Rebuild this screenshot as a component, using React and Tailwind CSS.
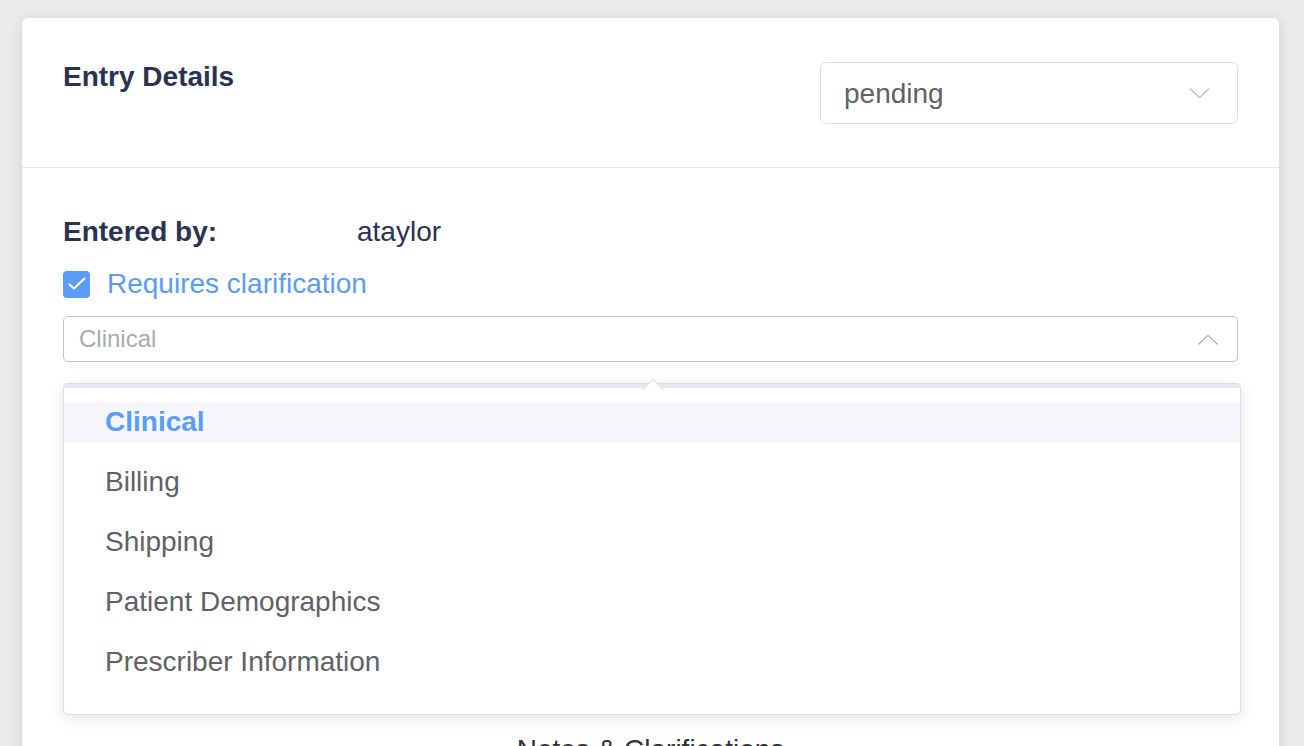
import { useState } from 'react';

const categories = ['Clinical', 'Billing', 'Shipping', 'Patient Demographics', 'Prescriber Information'];

const Chevron = ({ up = false, className = '' }) => (
  <svg viewBox="0 0 22 12" className={className} fill="none" stroke="currentColor" strokeWidth="1.3" strokeLinecap="round" strokeLinejoin="round">
    {up ? <path d="M1 11 L11 1.5 L21 11" /> : <path d="M1 1 L11 10.5 L21 1" />}
  </svg>
);

const EntryDetails = () => {
  const [status] = useState('pending');
  const [selected, setSelected] = useState('Clinical');
  const [clarify, setClarify] = useState(true);

  return (
    <div className="bg-white rounded-[6px] shadow-[0_2px_14px_rgba(0,0,0,0.12)]">
      {/* Header */}
      <div className="h-[150px] px-[41px] pt-[42px] flex items-start justify-between border-b border-[#e4e7ed]">
        <h2 className="text-[28px] leading-[34px] font-bold text-[#2a3352]">Entry Details</h2>
        <div className="mt-[2px] w-[418px] h-[62px] border border-[#dcdfe6] rounded-[6px] flex items-center justify-between pl-[23px] pr-[27px]">
          <span className="pt-[2px] text-[28px] text-[#606266]">{status}</span>
          <Chevron className="w-[21px] h-[11px] text-[#b4b7bf]" />
        </div>
      </div>

      {/* Body */}
      <div className="px-[41px] pt-[47px] pb-10">
        <div className="flex items-center text-[28px] leading-[34px] text-[#2a3352]">
          <span className="w-[294px] font-bold">Entered by:</span>
          <span>ataylor</span>
        </div>

        <label className="mt-[18px] flex items-center h-[34px] cursor-pointer" onClick={() => setClarify(!clarify)}>
          <span className="w-[27px] h-[27px] rounded-[4px] bg-[#5a9cf8] flex items-center justify-center">
            {clarify && (
              <svg viewBox="0 0 20 20" className="w-5 h-5" fill="none" stroke="white" strokeWidth="2" strokeLinecap="round" strokeLinejoin="round">
                <path d="M2.5 10.5 L7 14.5 L17.5 4.5" />
              </svg>
            )}
          </span>
          <span className="ml-[17px] text-[28px] text-[#5a9cf8]">Requires clarification</span>
        </label>

        <div className="relative mt-[15px]">
          <div className="h-[46px] border border-[#c0c4cc] rounded-[5px] flex items-center justify-between pl-[15px] pr-[19px]">
            <span className="text-[24px] text-[#a8abb2]">{selected}</span>
            <Chevron up className="w-[20px] h-[11px] text-[#a8abb2]" />
          </div>

          {/* Dropdown */}
          <div className="absolute left-0 right-[-3px] top-[67px] z-10 bg-white border border-[#dcdfe6] rounded-[5px] shadow-[0_4px_16px_rgba(0,0,0,0.1)]">
            <div className="h-[4px] bg-[#e6e8ee] rounded-t-[4px]" />
            <div className="absolute left-[581px] top-[-2px] w-4 h-4 rotate-45 bg-white border-t border-l border-[#dcdfe6]" />
            <ul className="pt-[4px] pb-[22px]">
              {categories.map((c) => (
                <li key={c} className="h-[60px] py-[10px]" onClick={() => setSelected(c)}>
                  <div className={`h-10 flex items-center px-[41px] text-[28px] ${c === selected ? 'bg-[#f5f6fa] font-bold text-[#5a9cf8]' : 'text-[#606266]'}`}>
                    {c}
                  </div>
                </li>
              ))}
            </ul>
          </div>
        </div>

        <h3 className="mt-[371px] text-center text-[28px] leading-[34px] text-[#303133]">Notes &amp; Clarifications</h3>
        <div className="h-40" />
      </div>
    </div>
  );
};

export default function App() {
  return (
    <div className="h-[746px] overflow-hidden bg-[#ebebeb] pl-[22px] pr-[25px] pt-[18px] font-['Liberation_Sans',Arial,sans-serif]">
      <EntryDetails />
    </div>
  );
}
